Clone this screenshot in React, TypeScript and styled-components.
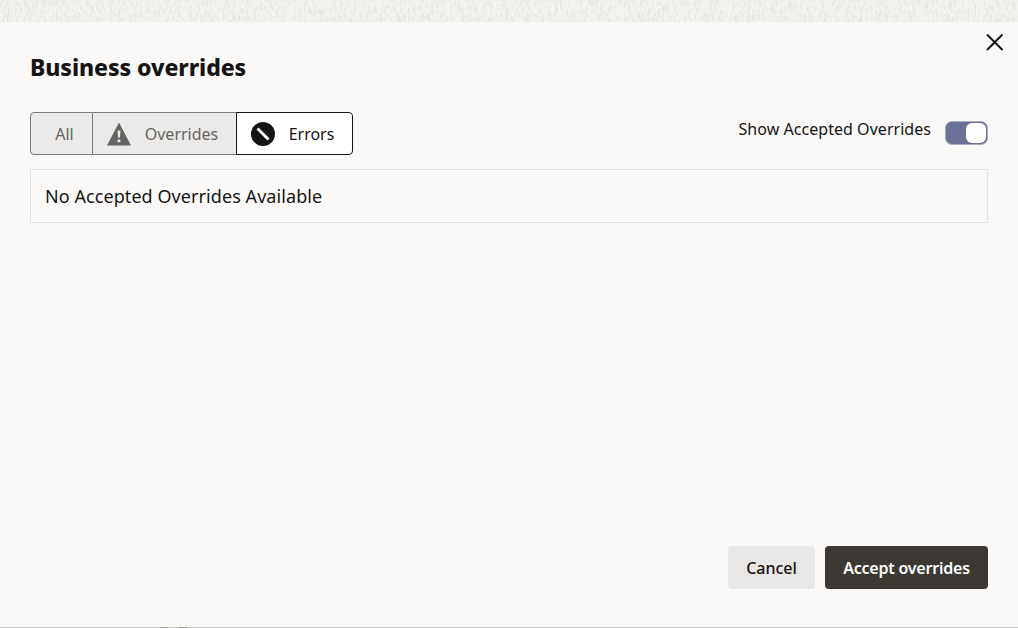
import React from "react";
import styled, { createGlobalStyle } from "styled-components";

const Global = createGlobalStyle`
  html, body { margin: 0; padding: 0; background: #fbf9f8; }
  body { font-family: "Noto Sans", "Open Sans", sans-serif; }
`;

const Page = styled.div`
  width: 1018px;
  height: 628px;
  display: flex;
  flex-direction: column;
  overflow: hidden;
  background: #fbf9f8;
`;

const TextureBand = styled.div`
  height: 22px;
  flex: none;
  background: #efeeeb;
  svg { display: block; }
`;

const Dialog = styled.div`
  flex: 1;
  display: flex;
  flex-direction: column;
  padding: 0 30px 38px;
  border-bottom: 1px solid #c4c3c1;
  position: relative;
`;

const BottomMark = styled.span<{ $left: number }>`
  position: absolute;
  left: ${(p) => p.$left}px;
  bottom: -1px;
  width: 8px;
  height: 1px;
  background: #a3a19e;
`;

const CloseButton = styled.button`
  position: absolute;
  top: 11px;
  right: 14px;
  width: 19px;
  height: 19px;
  padding: 0;
  border: 0;
  background: none;
  color: #161513;
  display: flex;
`;

const Title = styled.h1`
  margin: 31px 0 0;
  font-size: 23px;
  line-height: 28px;
  font-weight: 800;
  letter-spacing: -0.1px;
  color: #161513;
`;

const Toolbar = styled.div`
  margin-top: 31px;
  display: flex;
  justify-content: space-between;
  align-items: flex-start;
`;

const Segmented = styled.div`
  display: flex;
  height: 43px;
  box-sizing: border-box;
`;

const Segment = styled.button<{ $active?: boolean; $first?: boolean; $last?: boolean; $w: number; $shift: number }>`
  width: ${(p) => p.$w}px;
  box-sizing: border-box;
  display: flex;
  align-items: center;
  justify-content: center;
  gap: 14px;
  padding: 0 ${(p) => (p.$shift < 0 ? -p.$shift : 0)}px 0 ${(p) => (p.$shift > 0 ? p.$shift : 0)}px;
  margin-left: ${(p) => (p.$active ? -1 : 0)}px;
  font: inherit;
  font-size: 16px;
  background: ${(p) => (p.$active ? "#ffffff" : "#ebeae8")};
  color: ${(p) => (p.$active ? "#161513" : "#666462")};
  border: 1px solid ${(p) => (p.$active ? "#161513" : "#7b7977")};
  border-left-width: ${(p) => (p.$first || p.$active ? 1 : 0)}px;
  border-radius: ${(p) => (p.$first ? "4px 0 0 4px" : p.$last ? "0 4px 4px 0" : "0")};
`;

const ToggleGroup = styled.div`
  display: flex;
  align-items: flex-start;
  gap: 14px;
`;

const ToggleLabel = styled.span`
  font-size: 16px;
  line-height: 22px;
  letter-spacing: 0.04px;
  margin-top: 6px;
  color: #161513;
`;

const Toggle = styled.div`
  margin-top: 9px;
  width: 43px;
  height: 24px;
  box-sizing: border-box;
  border-radius: 7px;
  border: 1px solid #a9aec6;
  background: #6b7196;
  display: flex;
  justify-content: flex-end;
  padding: 1px;
`;

const Knob = styled.div`
  width: 20px;
  height: 20px;
  border-radius: 6px;
  background: #ffffff;
`;

const EmptyBox = styled.div`
  margin-top: 14px;
  height: 54px;
  box-sizing: border-box;
  border: 1px solid #dfe4ea;
  display: flex;
  align-items: center;
  padding-left: 14px;
  font-size: 18px;
  letter-spacing: 0.07px;
  color: #161513;
`;

const Footer = styled.div`
  margin-top: auto;
  display: flex;
  justify-content: flex-end;
  gap: 10px;
`;

const ActionButton = styled.button<{ $primary?: boolean; $w: number }>`
  width: ${(p) => p.$w}px;
  height: 43px;
  padding: 0;
  border: 0;
  border-radius: 4px;
  font: inherit;
  font-size: 16px;
  font-weight: ${(p) => (p.$primary ? 600 : 500)};
  letter-spacing: ${(p) => (p.$primary ? "-0.22px" : "0")};
  background: ${(p) => (p.$primary ? "#3c3934" : "#e8e7e5")};
  color: ${(p) => (p.$primary ? "#ffffff" : "#161513")};
`;

// Deterministic short dashes that read as the fine woven texture of the backdrop.
const dashes = (() => {
  const out: { x: number; y: number; h: number; light: boolean }[] = [];
  let seed = 7;
  const next = () => {
    seed = (seed * 16807) % 2147483647;
    return seed / 2147483647;
  };
  for (let x = 0; x < 1018; x += 2) {
    for (let y = 0; y < 22; y += 4) {
      out.push({ x: x + next(), y: y + next() * 3, h: 2 + next() * 4, light: next() > 0.3 });
    }
  }
  return out;
})();

export default function App() {
  return (
    <Page>
      <Global />
      <TextureBand>
        <svg width="1018" height="22" aria-hidden="true">
          {dashes.map((d, i) => (
            <rect
              key={i}
              x={d.x}
              y={d.y}
              width={1}
              height={d.h}
              fill={d.light ? "#f9f8f6" : "#e4e2df"}
              opacity={0.8}
            />
          ))}
        </svg>
      </TextureBand>
      <Dialog>
        <CloseButton aria-label="Close">
          <svg width="19" height="19" viewBox="0 0 19 19" fill="none" stroke="currentColor" strokeWidth="2">
            <path d="M2 1.5 L17.5 17 M17.5 1.5 L2 17" />
          </svg>
        </CloseButton>
        <Title>Business overrides</Title>
        <Toolbar>
          <Segmented>
            <Segment $first $w={63} $shift={6}>All</Segment>
            <Segment $w={144} $shift={-4}>
              <svg width="24" height="24" viewBox="0 0 24 24">
                <path
                  fillRule="evenodd"
                  fill="#666462"
                  d="M12 0.5 L24 23.5 H0 Z M10.6 8.5 H13.4 L13 15.5 H11 Z M10.6 17.5 H13.4 V20.3 H10.6 Z"
                />
              </svg>
              <span>Overrides</span>
            </Segment>
            <Segment $active $last $w={117} $shift={-4}>
              <svg width="24" height="24" viewBox="0 0 24 24">
                <circle cx="12" cy="12" r="12" fill="#161513" />
                <path d="M6.5 6.5 L17.5 17.5" stroke="#fff" strokeWidth="2.8" />
              </svg>
              <span>Errors</span>
            </Segment>
          </Segmented>
          <ToggleGroup>
            <ToggleLabel>Show Accepted Overrides</ToggleLabel>
            <Toggle>
              <Knob />
            </Toggle>
          </ToggleGroup>
        </Toolbar>
        <EmptyBox>No Accepted Overrides Available</EmptyBox>
        <Footer>
          <ActionButton $w={87}>Cancel</ActionButton>
          <ActionButton $primary $w={163}>Accept overrides</ActionButton>
        </Footer>
        <BottomMark $left={160} />
        <BottomMark $left={179} />
      </Dialog>
    </Page>
  );
}
